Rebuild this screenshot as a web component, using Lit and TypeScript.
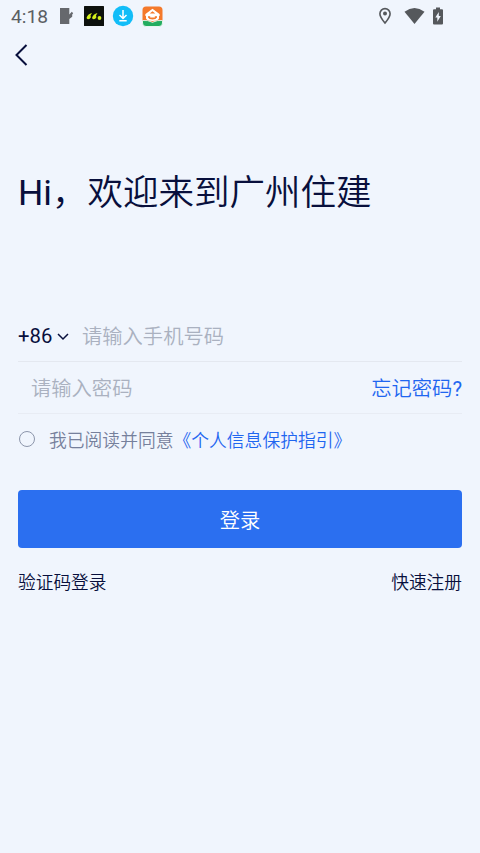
import { LitElement, html, css } from "lit";
import { customElement } from "lit/decorators.js";

@customElement("status-bar")
class StatusBar extends LitElement {
  static styles = css`
    :host { display: flex; height: 32px; align-items: center; justify-content: space-between; padding: 0 36px 0 11px; color: #5b5e63; }
    .group { display: flex; align-items: center; }
    .time { width: 48px; font: 19.2px/32px Roboto, sans-serif; padding-top: 1px; }
    svg { display: block; flex: none; }
    .download { margin-left: 8px; }
    .home { margin-left: 8px; }
    .wifi { margin-left: 12px; }
    .battery { margin-left: 7px; }
  `;
  render() {
    return html`
      <div class="group">
        <span class="time">4:18</span>
        <svg width="25" height="20" viewBox="0 0 25 20">
          <path fill="#66686d" d="M1 2h9.300v6.500l2.500-2.700 1.400 1.400-1 1.300v2.200L10.300 13v5H1z"/>
        </svg>
        <svg width="20" height="20" viewBox="0 0 20 20">
          <rect width="20" height="20" rx=".5" fill="#0d110d"/>
          <g fill="#d3f01b">
            <path d="M2.500 12Q3.500 8 8 7L6.500 9.500A2 2 0 1 1 2.500 12z"/>
            <path d="M8 12Q9 8 13.500 7l-1.500 2.500A2 2 0 1 1 8 12z"/>
            <circle cx="15.500" cy="12" r="1.900"/>
          </g>
        </svg>
        <svg class="download" width="22" height="22" viewBox="0 0 22 22">
          <circle cx="11" cy="11" r="10.200" fill="#12bdf8"/>
          <path d="M11 5v8M7.500 10l3.500 3.500 3.500-3.500M7.300 15.800h7.400" fill="none" stroke="#fff" stroke-width="1.500"/>
        </svg>
        <svg class="home" width="21" height="21" viewBox="0 0 21 21">
          <path fill="#f4792b" d="M4 .5h13a3.500 3.500 0 0 1 3.500 3.500v12H.5V4A3.500 3.500 0 0 1 4 .5z"/>
          <path fill="#fff" d="M10.500 2.800l7 5.200q1 1.500-.5 2.200v2.300q-1 2.500-6.500 2.500T4 12.500v-2.300q-1.500-.7-.5-2.200z"/>
          <path fill="#f4792b" d="M10.500 5.300l2.800 2.300H7.700zM6 10.200h2.200v1.300h4.600v-1.300H15v1.300q-1 2-4.500 2T6 11.500z"/>
          <path fill="#23ad60" stroke="#fff" stroke-width=".8" d="M.5 14.500q5-.7 10 1.800 5-2.500 10-1.800v2.500a3.500 3.500 0 0 1-3.500 3.500H4A3.500 3.500 0 0 1 .5 17z"/>
        </svg>
      </div>
      <div class="group">
        <svg width="14" height="18" viewBox="0 0 14 18">
          <path fill="none" stroke="#55585c" stroke-width="1.600" d="M7 16C4.500 13 1.900 10 1.900 6.700a5.100 5.100 0 0 1 10.200 0C12.100 10 9.500 13 7 16z"/>
          <circle cx="7" cy="6.600" r="2" fill="#55585c"/>
        </svg>
        <svg class="wifi" width="21" height="18" viewBox="0 0 21 18">
          <path fill="#55585c" d="M.5 4.800Q10.500-2.600 20.500 4.800L10.500 17z"/>
        </svg>
        <svg class="battery" width="12" height="18" viewBox="0 0 12 18">
          <path fill="#55585c" d="M4 .5h4v1.700h2a1 1 0 0 1 1 1V16.500a1 1 0 0 1-1 1H2a1 1 0 0 1-1-1V3.200a1 1 0 0 1 1-1h2z"/>
          <path fill="#f0f5fd" d="M6.800 5v4h2L5.300 14.800v-4.300h-2z"/>
        </svg>
      </div>
    `;
  }
}

@customElement("app-root")
class AppRoot extends LitElement {
  static styles = css`
    :host {
      display: block;
      height: 853px;
      overflow: hidden;
      background: #f0f5fd;
      color: #080f3c;
      font-family: Roboto, "Noto Sans CJK SC", sans-serif;
      font-weight: 350;
    }
    * { box-sizing: border-box; }
    svg { display: block; flex: none; }
    .nav { height: 46px; padding: 0 14px; display: flex; align-items: center; }
    .content { padding: 0 18px; }
    .latin { font-weight: 400; }
    h1 { margin: 85px 0 0; font-size: 35.5px; font-weight: 350; line-height: 60px; white-space: nowrap; }
    .form { margin-top: 87px; }
    .row { display: flex; align-items: center; font-size: 20.3px; line-height: 30px; white-space: nowrap; border-bottom: 1px solid #e4e8f0; }
    .phone { height: 52px; padding-top: 2px; }
    .password { height: 52px; padding: 3px 0 0 13px; justify-content: space-between; border-color: #e8ecf4; }
    .code { width: 39px; padding-bottom: 2px; }
    .hint { color: #aab1c0; }
    .phone .hint { margin-left: 13px; }
    .link { color: #1f66f0; }
    .terms { display: flex; align-items: center; height: 52px; padding-bottom: 2px; font-size: 17.8px; color: #76809c; white-space: nowrap; }
    .radio { width: 16px; height: 16px; margin: 0 14px 0 1px; border: 1px solid #8d96ab; border-radius: 50%; }
    .submit { display: block; width: 100%; height: 58px; margin-top: 24px; padding: 0; border: 0; border-radius: 4px; background: #2b6ff0; color: #fff; font: inherit; font-size: 20.3px; }
    .foot { display: flex; justify-content: space-between; margin-top: 21px; font-size: 17.700px; line-height: 28px; }
  `;
  render() {
    return html`
      <status-bar></status-bar>
      <div class="nav">
        <svg width="14" height="22" viewBox="0 0 14 22">
          <path d="M12.500 1L2.500 11l10 10" fill="none" stroke="#080f3c" stroke-width="2"/>
        </svg>
      </div>
      <div class="content">
        <h1><span class="latin">Hi</span>，欢迎来到广州住建</h1>
        <div class="form">
          <div class="row phone">
            <span class="code latin">+86</span>
            <svg width="12" height="8" viewBox="0 0 12 8">
              <path d="M1 1l5 5 5-5" fill="none" stroke="#080f3c" stroke-width="1.500"/>
            </svg>
            <span class="hint">请输入手机号码</span>
          </div>
          <div class="row password">
            <span class="hint">请输入密码</span>
            <span class="link">忘记密码<span class="latin">?</span></span>
          </div>
          <div class="terms">
            <span class="radio"></span>
            <span>我已阅读并同意</span><span class="link">《个人信息保护指引》</span>
          </div>
        </div>
        <button class="submit">登录</button>
        <div class="foot"><span>验证码登录</span><span>快速注册</span></div>
      </div>
    `;
  }
}
